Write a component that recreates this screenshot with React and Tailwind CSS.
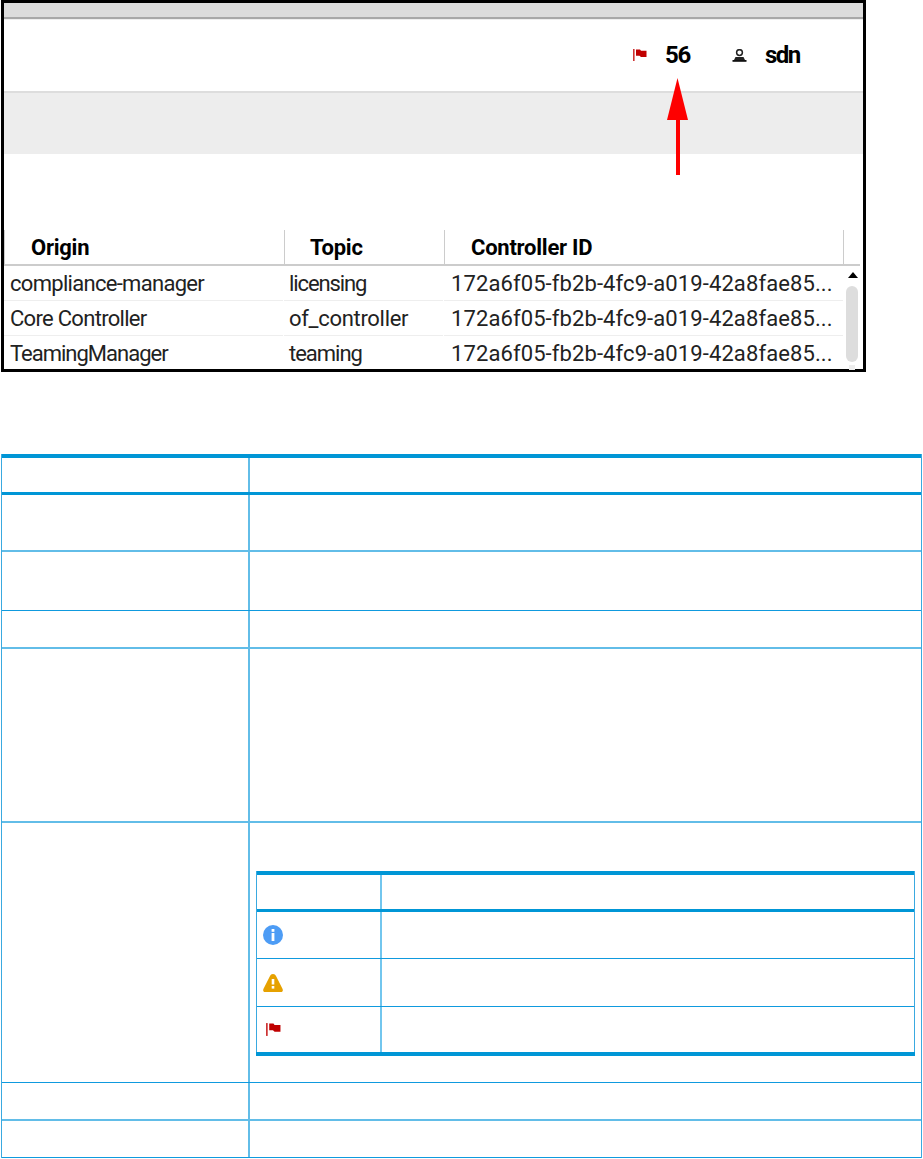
const font = { fontFamily: '"Roboto", "Noto Sans", sans-serif' };

const rows = [
  { origin: "compliance-manager", oc: "tracking-[-0.7px]", topic: "licensing", tc: "tracking-[-1.1px]" },
  { origin: "Core Controller", oc: "tracking-[-0.7px]", topic: "of_controller", tc: "tracking-[-0.3px]" },
  { origin: "TeamingManager", oc: "tracking-[-1px]", topic: "teaming", tc: "tracking-[-1px]" },
];
const controllerId = "172a6f05-fb2b-4fc9-a019-42a8fae85...";

function FlagIcon({ className }) {
  return (
    <svg viewBox="0 0 14 12" className={className} fill="#c00000">
      <rect x="0" y="0" width="1.6" height="12" opacity="0.8" />
      <path d="M3 0.5 L7 0.5 L8 1.8 L13.5 1.8 L13.5 8 L8 8 L6.5 6.8 L3 6.8 Z" />
    </svg>
  );
}

function PersonIcon() {
  return (
    <svg viewBox="0 0 15 13" className="w-[15px] h-[13px]">
      <circle cx="7.5" cy="3.6" r="2.9" fill="none" stroke="#222" strokeWidth="1.5" />
      <path d="M3.5 8 L11.5 8 L13 11 L2 11 Z" fill="#222" />
      <rect x="0.5" y="11" width="14" height="1.8" fill="#111" />
    </svg>
  );
}

function InfoIcon() {
  return (
    <svg viewBox="0 0 20 20" className="w-5 h-5">
      <circle cx="10" cy="10" r="10" fill="#4d9cf5" />
      <rect x="8.6" y="4" width="2.8" height="2.8" fill="#fff" />
      <rect x="8.6" y="8" width="2.8" height="8" fill="#fff" />
    </svg>
  );
}

function WarnIcon() {
  return (
    <svg viewBox="0 0 20 18" className="w-5 h-[18px]">
      <path d="M10 0 C11.6 0 12.4 0.8 13 2 L19.6 15 C20.2 16.8 19.6 18 18 18 L2 18 C0.4 18 -0.2 16.8 0.4 15 L7 2 C7.6 0.8 8.4 0 10 0 Z" fill="#e6a100" />
      <rect x="8.7" y="5" width="2.6" height="5.5" fill="#fff" />
      <rect x="8.7" y="12" width="2.6" height="2.6" fill="#fff" />
    </svg>
  );
}

function OuterRow({ h, soft, children }) {
  return (
    <div className={`grid grid-cols-[248px_1fr] ${h} ${soft ? "border-b-2 border-[#62bde8]" : "border-b border-[#0f9ade]"}`}>
      <div className="border-r-2 border-[#62bde8]" />
      <div>{children}</div>
    </div>
  );
}

function InnerRow({ h, icon, last }) {
  return (
    <div className={`grid grid-cols-[125px_1fr] ${h} ${last ? "" : "border-b border-[#0f9ade]"}`}>
      <div className="border-r-2 border-[#72c6ee] flex items-center pl-[6px]">{icon}</div>
      <div />
    </div>
  );
}

export default function App() {
  return (
    <div className="relative w-[923px] h-[1159px] bg-white overflow-hidden" style={font}>
      <div className="ml-[1px] w-[865px] h-[372px] border-[3px] border-black flex flex-col text-[#222]">
        <div className="h-[16px] shrink-0 bg-[#dcdcdc] border-b-2 border-[#a8a8a8]" />
        <div className="h-[72px] shrink-0 border-t border-[#eeeeee] flex items-center justify-end pr-[64px] font-bold text-[24px] text-black whitespace-nowrap">
          <FlagIcon className="w-[14px] h-[12px] mt-[-1px]" />
          <span className="ml-[18px] w-[25px] mt-[-1px] tracking-[-1.2px]">56</span>
          <span className="ml-[42px] mt-[-1px]"><PersonIcon /></span>
          <span className="ml-[18px] w-[34px] mt-[-1px] tracking-[-1.5px]">sdn</span>
        </div>
        <div className="h-[63px] shrink-0 bg-[#ededed] border-t-2 border-[#dddddd]" />
        <div className="h-[76px] shrink-0" />
        <div className="h-[36px] shrink-0 mr-[3px] border-b-2 border-[#cccccc] flex font-bold text-[22px] text-black leading-[36px] tracking-[-0.25px]">
          <div className="w-[281px] pl-[26px] border-l border-r border-[#cccccc]">Origin</div>
          <div className="w-[160px] pl-[25px] border-r border-[#cccccc]">Topic</div>
          <div className="w-[399px] pl-[26px] border-r border-[#cccccc]">Controller ID</div>
        </div>
        <div className="relative flex-1 min-h-0">
          {rows.map((row, i) => (
            <div key={row.origin} className="h-[35px] w-[839px] flex text-[22px] leading-[36px] whitespace-nowrap">
              <div className={`w-[279px] mr-[1px] pl-[6px] ${row.oc} ${i < 2 ? "border-b border-[#eeeeee]" : ""}`}>{row.origin}</div>
              <div className={`w-[159px] mr-[1px] pl-[5px] ${row.tc} ${i < 2 ? "border-b border-[#eeeeee]" : ""}`}>{row.topic}</div>
              <div className={`flex-1 pl-[7px] tracking-[0.1px] ${i < 2 ? "border-b border-[#eeeeee]" : ""}`}>{controllerId}</div>
            </div>
          ))}
          <div className="absolute left-[842px] top-[6px] w-[12px] flex flex-col items-center">
            <div className="ml-[1px] w-0 h-0 border-l-[5px] border-r-[5px] border-b-[6px] border-l-transparent border-r-transparent border-b-black" />
            <div className="mt-[8px] w-[12px] h-[76px] rounded-[6px] bg-[#dddddd]" />
            <div className="mt-[3px] w-[6px] h-[5px] bg-[#eeeeee]" />
          </div>
        </div>
      </div>

      <svg className="absolute left-[662px] top-[76px] w-[30px] h-[100px]" viewBox="0 0 30 100">
        <path d="M15.5 2 L26 44 L18 44 L18 99 L14 99 L14 44 L5 44 Z" fill="#fe0000" />
      </svg>

      <div className="mt-[82px] ml-[1px] w-[921px] h-[704px] border-l border-r border-[#3aa9e0] flex flex-col">
        <div className="grid grid-cols-[248px_1fr] h-[41px] border-t-4 border-b-[3px] border-[#0096d6]">
          <div className="border-r-2 border-[#62bde8]" />
          <div />
        </div>
        <OuterRow h="h-[57px]" soft />
        <OuterRow h="h-[59px]" />
        <OuterRow h="h-[38px]" soft />
        <OuterRow h="h-[174px]" soft />
        <div className="grid grid-cols-[248px_1fr] h-[260px] border-b border-[#0f9ade]">
          <div className="border-r-2 border-[#62bde8]" />
          <div className="pt-[48px] pl-[6px]">
            <div className="w-[659px] h-[185px] border-x border-[#3aa9e0] flex flex-col">
              <div className="grid grid-cols-[125px_1fr] h-[41px] border-t-4 border-b-[3px] border-[#0096d6]">
                <div className="border-r-2 border-[#72c6ee]" />
                <div />
              </div>
              <InnerRow h="h-[47px]" icon={<InfoIcon />} />
              <InnerRow h="h-[48px]" icon={<WarnIcon />} />
              <InnerRow h="h-[45px]" last icon={<FlagIcon className="w-[15px] h-[13px] ml-[3px]" />} />
              <div className="h-[4px] shrink-0 bg-[#0096d6] -mx-px" />
            </div>
          </div>
        </div>
        <OuterRow h="h-[38px]" soft />
        <OuterRow h="h-[37px]" />
      </div>
    </div>
  );
}
